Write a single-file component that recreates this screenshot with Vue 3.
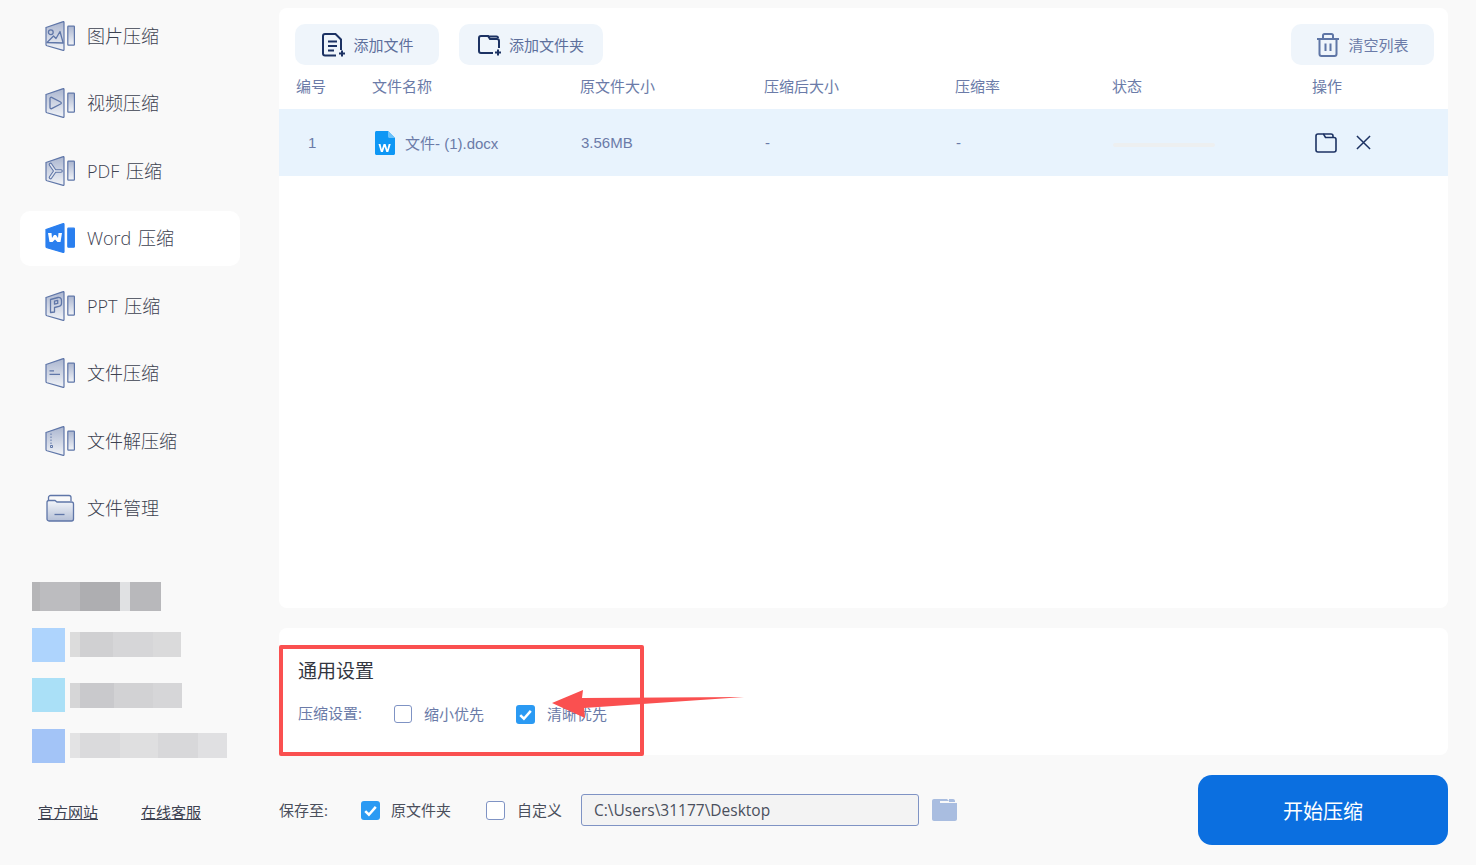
<template>
  <div class="app">
    <!-- 左侧菜单 -->
    <aside class="sidebar">
      <nav class="menu">
        <div v-for="item in menuItems" :key="item.key" class="menu-item" :class="{ active: item.key === 'word' }">
          <svg v-if="item.key !== 'manage'" class="menu-icon" viewBox="0 0 30 30">
            <defs>
              <linearGradient :id="`grad-${item.key}`" x1="0" y1="0" x2="0" y2="1">
                <stop offset="0" :stop-color="item.key === 'word' ? '#2a7fef' : '#aab5cf'" />
                <stop offset="1" :stop-color="item.key === 'word' ? '#2a7fef' : '#f2f4f8'" />
              </linearGradient>
            </defs>
            <path
              d="M1 6.500 18.200.6c.5-.2.8.1.8.6v27.600c0 .5-.3.8-.8.6L2 24.800c-.6-.2-1-.7-1-1.300z"
              :fill="`url(#grad-${item.key})`"
              :stroke="item.key === 'word' ? '#2a7fef' : '#5f76a8'"
              stroke-width="1.200"
            />
            <rect x="22.800" y="5.200" width="6.600" height="19" rx=".6" :fill="item.key === 'word' ? '#2a7fef' : `url(#grad-${item.key})`" :stroke="item.key === 'word' ? '#2a7fef' : '#5f76a8'" stroke-width="1.200" />
            <g fill="none" stroke="#5f76a8" stroke-width="1.300" stroke-linejoin="round">
              <template v-if="item.key === 'image'">
                <circle cx="5.800" cy="11.200" r="2.400" />
                <path d="M2 21.500 8.500 15l2.500 2.500 4-7 3.200 11.500z" />
              </template>
              <path v-else-if="item.key === 'video'" d="M5 10.500c0-1 .8-1.500 1.600-1.100l9 4.600c.9.5.9 1.500 0 2l-9 4.600c-.8.4-1.600-.1-1.600-1.100z" />
              <template v-else-if="item.key === 'pdf'">
                <path d="M5.500 8.500 10 15l-4.500 6.500M10 15h6" stroke-width="3.600" stroke-linecap="round" />
                <path d="M5.500 8.500 10 15l-4.500 6.500M10 15h6" stroke="#e2e6ef" stroke-width="1.400" stroke-linecap="round" />
              </template>
              <path v-else-if="item.key === 'word'" d="M3 10h3.500l.5 5 2-3h2l2 3 .5-5H17l-1.500 9h-3L10 16.500 7.500 19h-3z" fill="#fff" stroke="none" />
              <path v-else-if="item.key === 'ppt'" d="M5.500 21.500V8.500L13 6.500c2-.5 3.500 1 3.500 3v3c0 1.500-1 2.500-2.500 2.900l-4.500 1.100v4.500zM9.500 10.200v3l3.200-.8v-3z" />
              <path v-else-if="item.key === 'file'" d="M4.500 12.800H9M4.500 16.300H15" />
              <path v-else-if="item.key === 'unzip'" d="M6 7.500v1.500M6 10.500v1.500M6 13.500v1.500M6 16.500v1.500M5.500 19.500h2v2h-2z" stroke-width="1" />
            </g>
          </svg>
          <svg v-else class="menu-icon" viewBox="0 0 30 30">
            <defs>
              <linearGradient id="grad-manage" x1="0" y1="0" x2="0" y2="1">
                <stop offset="0" stop-color="#f4f6fa" />
                <stop offset="1" stop-color="#b4bfd6" />
              </linearGradient>
            </defs>
            <path d="M3.500 7V4.500C3.500 3.400 4.400 2.500 5.500 2.500h18.500c1.100 0 2 .9 2 2V8" fill="none" stroke="#5f76a8" stroke-width="1.300" />
            <path d="M2 9.500c0-1.100.9-2 2-2h6l2 1.500h14.500c1.100 0 2 .9 2 2v15c0 1.100-.9 2-2 2H4c-1.100 0-2-.9-2-2z" fill="url(#grad-manage)" stroke="#5f76a8" stroke-width="1.300" />
            <path d="M9.500 21.500h10" stroke="#5f76a8" stroke-width="1.300" />
          </svg>
          <span class="menu-label">{{ item.label }}</span>
        </div>
      </nav>

      <!-- 打码的推广内容 -->
      <div class="promo">
        <div v-for="(row, index) in promoRows" :key="index" class="promo-row" :class="row.cls">
          <span v-if="row.square" class="promo-square" :style="{ backgroundColor: row.square }" />
          <div class="promo-bar">
            <span
              v-for="(seg, i) in row.segments"
              :key="i"
              :style="{ width: seg[0] + 'px', backgroundColor: seg[1] }"
            />
          </div>
        </div>
      </div>

      <div class="side-links">
        <a>官方网站</a>
        <a>在线客服</a>
      </div>
    </aside>

    <main class="content">
      <section class="panel file-panel">
        <div class="toolbar">
          <button class="tool-btn wide-gap">
            <svg viewBox="0 0 24 24" class="tool-icon" fill="none" stroke="#1c3263" stroke-width="2">
              <path d="M15 22.500H4c-1.100 0-2-.9-2-2V3c0-1.100.9-2 2-2h10.500L20 6.500V17" />
              <path d="M7 8.500h9M7 13h9M7 17.500h6" />
              <path d="M21 17.500v6M18 20.500h6" />
            </svg>
            添加文件
          </button>
          <button class="tool-btn">
            <svg viewBox="0 0 24 24" class="tool-icon" fill="none" stroke="#1c3263" stroke-width="2">
              <path d="M15 20H3c-1.100 0-2-.9-2-2V5c0-1.100.9-2 2-2h7l2 3h7c1.100 0 2 .9 2 2v7" />
              <path d="M10 3.500 18.500 3.500c.8 0 1.500.7 1.500 1.500" />
              <path d="M20 16.500v6M17 19.500h6" />
            </svg>
            添加文件夹
          </button>
          <button class="tool-btn muted push-right">
            <svg viewBox="0 0 24 24" class="tool-icon" fill="none" stroke="#5f76a6" stroke-width="2">
              <path d="M1 6h22M7 6V2.500c0-.8.7-1.500 1.500-1.500h7c.8 0 1.500.7 1.500 1.500V6M3.500 6v15c0 1.100.9 2 2 2h13c1.100 0 2-.9 2-2V6M9.500 10.500V18M14.500 10.500V18" />
            </svg>
            清空列表
          </button>
        </div>

        <div class="table-row table-head">
          <div v-for="col in columns" :key="col">{{ col }}</div>
        </div>

        <div class="table-row file-row">
          <div class="cell-index">1</div>
          <div class="cell-name">
            <svg class="doc-icon" viewBox="0 0 20 24">
              <path d="M1.500 0H13l7 7v15.500c0 .8-.7 1.500-1.500 1.500h-17C.7 24 0 23.300 0 22.500v-21C0 .7.700 0 1.500 0z" fill="#0e97f5" />
              <path d="M13 0l7 7h-5.500c-.8 0-1.500-.7-1.500-1.500z" fill="#6cc2fa" />
              <path d="M3.500 13h2l1.300 5.500L8.600 13h2l1.700 5.500 1.400-5.500h2l-2.400 8h-2l-1.700-5.200L7.900 21h-2z" fill="#fff" />
            </svg>
            <span>文件- (1).docx</span>
          </div>
          <div class="cell-plain">3.56MB</div>
          <div class="cell-plain">-</div>
          <div class="cell-plain">-</div>
          <div class="cell-progress"><span /></div>
          <div class="cell-actions">
            <svg viewBox="0 0 22 20" class="action-folder" fill="none" stroke="#1c3263" stroke-width="1.600">
              <path d="M1 3c0-1.100.9-2 2-2h5.500l2 3.500H19c1.100 0 2 .9 2 2V17c0 1.100-.9 2-2 2H3c-1.100 0-2-.9-2-2z" />
              <path d="M8.500 1H16c1.100 0 2 .9 2 2v1.500" />
            </svg>
            <svg viewBox="0 0 16 16" class="action-close" fill="none" stroke="#1c3263" stroke-width="1.600">
              <path d="M1 1l14 14M15 1 1 15" />
            </svg>
          </div>
        </div>
      </section>

      <section class="panel settings-panel">
        <h3 class="settings-title">通用设置</h3>
        <div class="settings-row">
          <span class="settings-label">压缩设置:</span>
          <label class="check-item first">
            <span class="checkbox" />
            <span class="check-text">缩小优先</span>
          </label>
          <label class="check-item">
            <span class="checkbox checked">
              <svg viewBox="0 0 18 18"><path d="M4 9.500l3.500 3.500L14 5.500" /></svg>
            </span>
            <span class="check-text">清晰优先</span>
          </label>
        </div>
      </section>

      <section class="save-bar">
        <span class="save-label">保存至:</span>
        <label class="check-item small">
          <span class="checkbox checked">
            <svg viewBox="0 0 18 18"><path d="M4 9.500l3.500 3.500L14 5.500" /></svg>
          </span>
          <span class="check-text">原文件夹</span>
        </label>
        <label class="check-item small custom">
          <span class="checkbox" />
          <span class="check-text">自定义</span>
        </label>
        <input class="path-input" value="C:\Users\31177\Desktop" readonly />
        <svg class="path-folder" viewBox="0 0 25 22">
          <path d="M0 2c0-1.100.9-2 2-2h13l2 2h-9v2h17v16c0 1.100-.9 2-2 2H2c-1.100 0-2-.9-2-2z" fill="#a9bde0" />
          <path d="M17 0h4c1.100 0 2 .9 2 2v1H17z" fill="#a9bde0" />
        </svg>
        <button class="start-btn">开始压缩</button>
      </section>
    </main>

    <!-- 截图上的红色标注 -->
    <div class="mark-box" />
    <svg class="mark-arrow" viewBox="0 0 193 28">
      <polygon points="0,13 31,0 30,8 192,7 32,18 33,28" fill="#fa5050" />
    </svg>
  </div>
</template>

<script setup>
const menuItems = [
  { key: 'image', label: '图片压缩' },
  { key: 'video', label: '视频压缩' },
  { key: 'pdf', label: 'PDF 压缩' },
  { key: 'word', label: 'Word 压缩' },
  { key: 'ppt', label: 'PPT 压缩' },
  { key: 'file', label: '文件压缩' },
  { key: 'unzip', label: '文件解压缩' },
  { key: 'manage', label: '文件管理' }
]

const columns = ['编号', '文件名称', '原文件大小', '压缩后大小', '压缩率', '状态', '操作']

const promoRows = [
  {
    cls: 'title',
    segments: [[8, '#b5b5b7'], [40, '#bcbcbf'], [40, '#aeaeb1'], [10, '#e0e1e3'], [31, '#b8b8bb']]
  },
  {
    square: '#aed4fd',
    segments: [[10, '#dcdcdc'], [33, '#d0d0d2'], [40, '#d6d6d8'], [28, '#dadadb']]
  },
  {
    square: '#aae0f7',
    segments: [[10, '#d6d6d7'], [34, '#c9c9cc'], [39, '#d2d2d4'], [29, '#d6d6d8']]
  },
  {
    square: '#a3c4f7',
    segments: [[10, '#e3e3e4'], [40, '#dadadc'], [38, '#dfdfe0'], [40, '#d8d8da'], [29, '#e0e0e2']]
  }
]
</script>

<style>
html,
body {
  margin: 0;
  background: #f9f9f9;
}
</style>

<style scoped>
.app {
  position: relative;
  display: flex;
  width: 1476px;
  height: 865px;
  overflow: hidden;
  background: #f9f9f9;
  font-family: "Open Sans", "Noto Sans CJK SC", sans-serif;
  color: #3a3f4b;
}

.sidebar {
  width: 279px;
  flex-shrink: 0;
  padding-top: 8px;
  box-sizing: border-box;
}

.menu {
  display: flex;
  flex-direction: column;
  gap: 12.5px;
  margin-left: 20px;
  width: 220px;
}

.menu-item {
  display: flex;
  align-items: center;
  height: 55px;
  padding-left: 25px;
  border-radius: 10px;
  box-sizing: border-box;
}

.menu-item.active {
  background: #fff;
}

.menu-icon {
  width: 30px;
  height: 30px;
  flex-shrink: 0;
}

.menu-label {
  margin: 0 0 2px 12px;
  font-size: 18px;
  font-weight: 300;
  word-spacing: 2px;
  color: #3c4150;
}

.promo {
  margin: 46.5px 0 0 32px;
}

.promo-row {
  display: flex;
  align-items: center;
  height: 34px;
  margin-top: 16.500px;
}

.promo-row.title {
  height: 29px;
  margin-top: 0;
}

.promo-square {
  width: 33px;
  height: 34px;
  margin-right: 5px;
}

.promo-bar {
  display: flex;
  height: 25px;
}

.promo-row.title .promo-bar {
  height: 29px;
}

.side-links {
  display: flex;
  gap: 43px;
  margin: 39px 0 0 38px;
}

.side-links a {
  font-size: 15px;
  line-height: 20px;
  color: #3c4150;
  text-decoration: underline;
}

.content {
  width: 1169px;
  padding-top: 8px;
}

.panel {
  background: #fff;
  border-radius: 8px;
}

.file-panel {
  height: 600px;
}

.toolbar {
  display: flex;
  gap: 20px;
  padding: 16px 14px 0 16px;
}

.tool-btn {
  display: flex;
  align-items: center;
  justify-content: center;
  gap: 7px;
  width: 144px;
  height: 41px;
  padding: 0;
  border: none;
  border-radius: 10px;
  background: #eff5fb;
  font-family: inherit;
  font-size: 15px;
  color: #5d6f9c;
}

.tool-btn.wide-gap {
  gap: 8px;
  padding-left: 1px;
}

.tool-btn.muted {
  width: 143px;
  gap: 8px;
  color: #6b7ba8;
}

.push-right {
  margin-left: auto;
}

.tool-icon {
  width: 24px;
  height: 24px;
}

.table-row {
  display: grid;
  grid-template-columns: 76px 208px 184px 191px 157px 200px 1fr;
  align-items: center;
  padding-left: 17px;
}

.table-head {
  height: 44px;
  padding-bottom: 4px;
  box-sizing: border-box;
  font-size: 15px;
  color: #6b7ba8;
}

.file-row {
  height: 67px;
  background: #e8f3fd;
  font-family: "Liberation Sans", "Noto Sans CJK SC", sans-serif;
  font-size: 15px;
  color: #6b7ba8;
}

.cell-index {
  padding-left: 12px;
}

.cell-name {
  display: flex;
  align-items: center;
  gap: 10px;
  padding-left: 3px;
}

.doc-icon {
  width: 20px;
  height: 24px;
}

.cell-plain {
  padding-left: 1px;
}

.cell-progress {
  padding: 5px 0 0 1px;
}

.cell-progress span {
  display: block;
  width: 102px;
  height: 4px;
  border-radius: 2px;
  background: #edeff0;
}

.cell-actions {
  display: flex;
  align-items: center;
  gap: 19px;
  padding-left: 3px;
}

.action-folder {
  width: 22px;
  height: 20px;
}

.action-close {
  width: 15px;
  height: 15px;
}

.settings-panel {
  height: 127px;
  margin-top: 20px;
  padding: 30px 19px 0;
  box-sizing: border-box;
}

.settings-title {
  margin: 0;
  font-size: 19px;
  line-height: 26px;
  font-weight: 400;
  color: #33363f;
}

.settings-row {
  display: flex;
  align-items: center;
  height: 20px;
  margin-top: 20px;
  font-size: 15px;
  color: #6b7ba8;
}

.settings-label {
  width: 96px;
  margin-bottom: 4px;
}

.check-item {
  display: flex;
  align-items: center;
  gap: 12px;
  margin-right: 32px;
}

.check-text {
  margin-bottom: 2px;
}

.checkbox {
  display: block;
  width: 18px;
  height: 18px;
  border: 1.500px solid #7f93c4;
  border-radius: 3px;
  box-sizing: border-box;
  background: #fff;
}

.checkbox.checked {
  width: 19px;
  height: 19px;
  border: none;
  background: #2b9af3;
}

.checkbox svg {
  display: block;
  width: 19px;
  height: 19px;
  fill: none;
  stroke: #fff;
  stroke-width: 2.400;
}

.save-bar {
  display: flex;
  align-items: center;
  height: 70px;
  margin-top: 20px;
  font-size: 15px;
  color: #4a4f5c;
}

.save-label {
  width: 82px;
  margin-bottom: 2px;
}

.check-item.small {
  gap: 11px;
  margin-right: 35px;
}

.check-item.small.custom {
  gap: 12px;
  margin-right: 19px;
}

.check-item.small.custom .checkbox {
  width: 19px;
  height: 19px;
}

.path-input {
  width: 338px;
  height: 32px;
  padding: 0 12px;
  border: 1px solid #7f93c4;
  border-radius: 3px;
  box-sizing: border-box;
  background: #f3f3f3;
  font-family: inherit;
  font-size: 15.500px;
  color: #4a4f5c;
  outline: none;
}

.path-folder {
  width: 25px;
  height: 22px;
  margin-left: 13px;
}

.start-btn {
  width: 250px;
  height: 70px;
  margin-left: auto;
  border: none;
  border-radius: 14px;
  background: #0b6fe0;
  font-family: inherit;
  font-size: 20px;
  color: #fff;
}

.mark-box {
  position: absolute;
  left: 279px;
  top: 645px;
  width: 365px;
  height: 111px;
  border: 4px solid #fa5050;
  border-radius: 2px;
  box-sizing: border-box;
}

.mark-arrow {
  position: absolute;
  left: 552px;
  top: 690px;
  width: 193px;
  height: 28px;
}
</style>
